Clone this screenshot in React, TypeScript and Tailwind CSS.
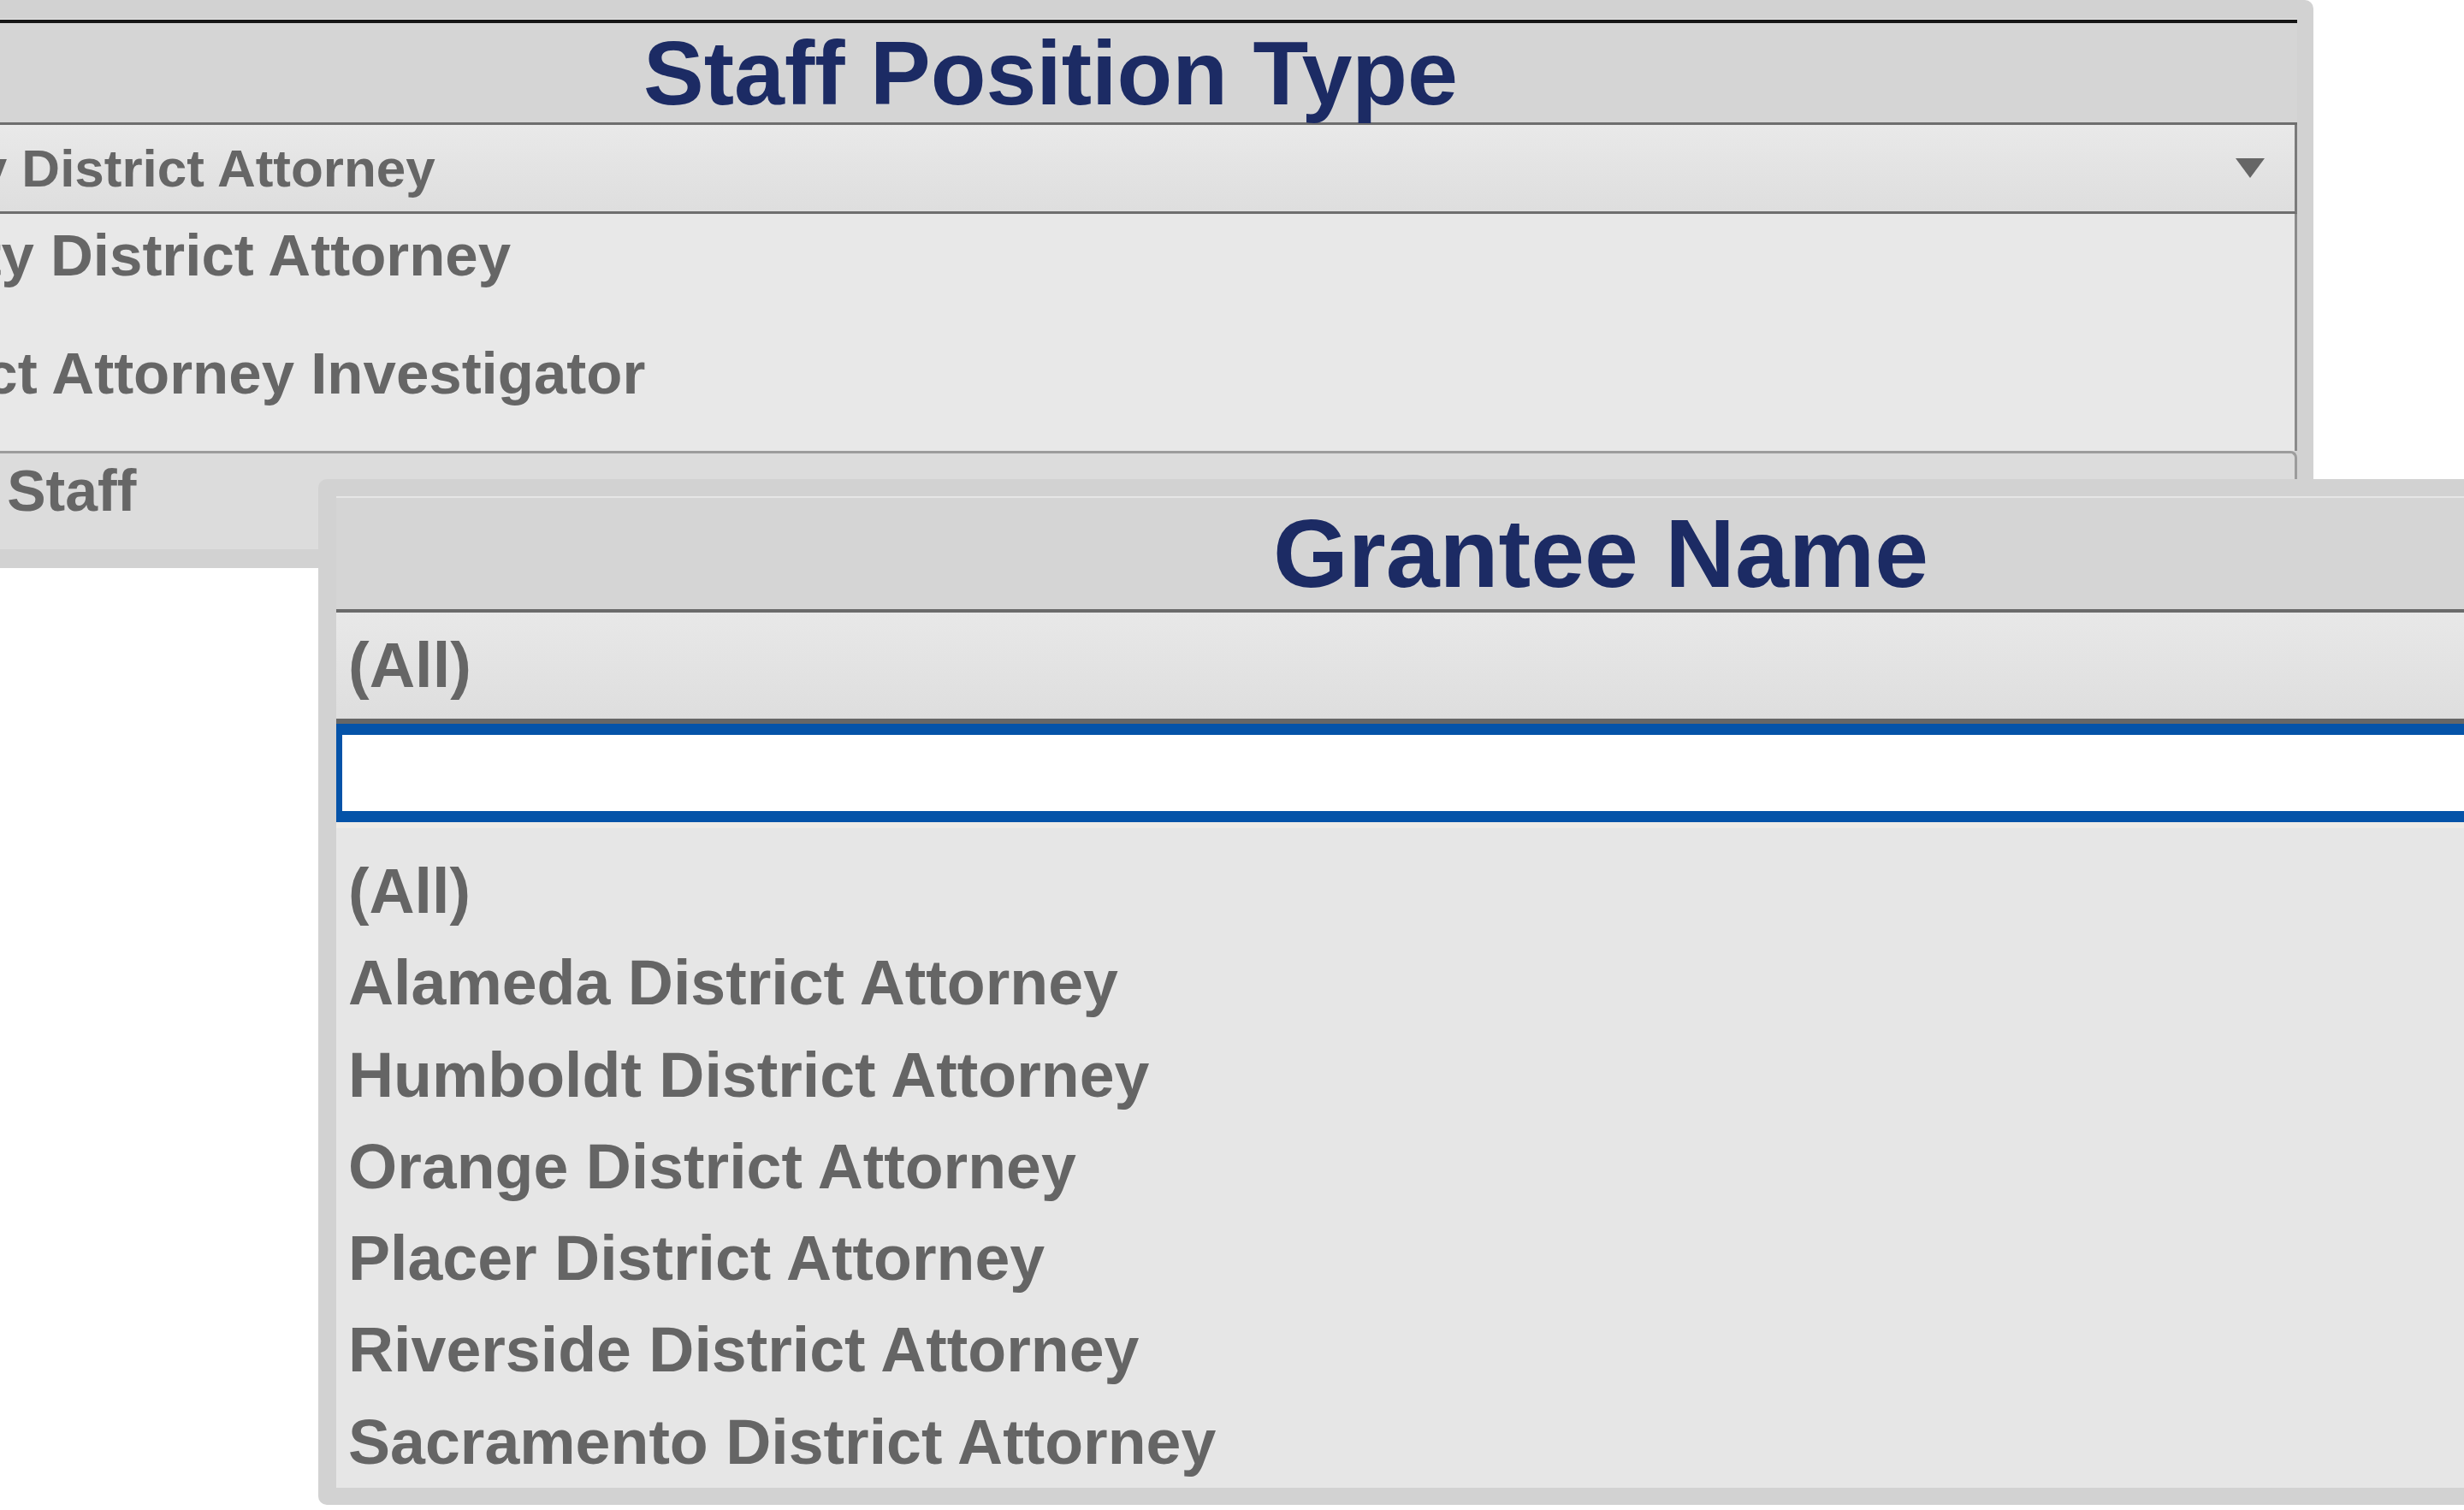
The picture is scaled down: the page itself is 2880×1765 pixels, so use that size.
import React from 'react';

const granteeOptions = [
  '(All)',
  'Alameda District Attorney',
  'Humboldt District Attorney',
  'Orange District Attorney',
  'Placer District Attorney',
  'Riverside District Attorney',
  'Sacramento District Attorney',
];

const staffOptions = ['Deputy District Attorney', 'District Attorney Investigator'];

const DropArrow: React.FC = () => (
  <svg width="34" height="23" viewBox="0 0 34 23" className="shrink-0">
    <polygon points="0,0 34,0 17,23" fill="#666666" />
  </svg>
);

const StaffPositionPanel: React.FC = () => (
  <div className="absolute left-[-250px] top-0 w-[2954px] rounded-[10px] bg-[#d2d2d2] pt-[22px] pr-[19px] pb-[22px] pl-[21px]">
    <div className="border-t border-[#ededed]">
      {/* header */}
      <div className="flex h-[123px] items-center justify-center border-t-4 border-b-[3px] border-t-[#161616] border-b-[#6e6e6e] bg-[#d5d5d5]">
        <span className="text-[106px] font-bold leading-none text-[#1c2b64]">Staff Position Type</span>
      </div>

      {/* selected value */}
      <div className="flex h-[104px] items-center justify-between border-r-[3px] border-b-[3px] border-r-[#7a7a7a] border-b-[#6e6e6e] bg-gradient-to-b from-[#e9e9e9] to-[#dedede] pr-[35px] pl-[27px]">
        <span className="text-[62px] font-bold leading-none text-[#666666]">Deputy District Attorney</span>
        <DropArrow />
      </div>

      {/* open list */}
      <div className="flex flex-col gap-[41px] border-r-[3px] border-[#8a8a8a] bg-[#e8e8e8] pb-[42px] pl-[35px]">
        {staffOptions.map((opt) => (
          <div key={opt} className="text-[69px] font-bold leading-[97px] text-[#666666]">
            {opt}
          </div>
        ))}
      </div>

      <div className="h-[115px] rounded-tr-[8px] border-t-[3px] border-r-[3px] border-[#9c9c9c] bg-[#dcdcdc] pl-[37px]">
        <span className="text-[68px] font-bold leading-[86px] text-[#666666]">Other Staff</span>
      </div>
    </div>
  </div>
);

const GranteePanel: React.FC = () => (
  <div className="absolute left-[372px] top-[560px] w-[2998px] rounded-[10px] bg-[#d2d2d2] pt-[20px] pr-[21px] pb-[20px] pl-[21px]">
    {/* header */}
    <div className="flex h-[136px] items-center justify-center border-t-2 border-b-4 border-t-[#e6e6e6] border-b-[#6b6b6b] bg-[#d5d5d5]">
      <span className="text-[113px] font-bold leading-none text-[#1c2b64]">Grantee Name</span>
    </div>

    {/* selected value */}
    <div className="flex h-[130px] items-center border-b-[6px] border-[#666666] bg-gradient-to-b from-[#e8e8e8] to-[#dedede] pl-[14px]">
      <span className="text-[74px] font-bold leading-none text-[#666666]">(All)</span>
    </div>

    {/* search box */}
    <div className="h-[115px] border-t-[13px] border-b-[13px] border-l-[7px] border-[#0553a8] bg-white" />

    {/* options */}
    <div className="border-t-[7px] border-[#eeebe7] bg-[#e6e6e6] pt-[20px] pl-[14px]">
      {granteeOptions.map((opt) => (
        <div key={opt} className="text-[73.5px] font-bold leading-[107.3px] text-[#656565]">
          {opt}
        </div>
      ))}
    </div>
  </div>
);

export default function App() {
  return (
    <div className="relative h-[1765px] w-[2880px] overflow-hidden bg-white font-['Liberation_Sans',Arial,sans-serif]">
      <StaffPositionPanel />
      <GranteePanel />
    </div>
  );
}
